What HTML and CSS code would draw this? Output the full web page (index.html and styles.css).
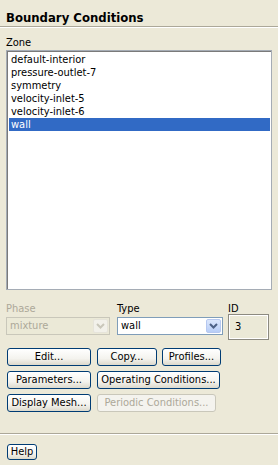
FILE: index.html
```html
<!DOCTYPE html>
<html>
<head>
<meta charset="utf-8">
<link rel="stylesheet" href="styles.css">
</head>
<body>
<div class="panel">
  <div class="title">Boundary Conditions</div>
  <div class="sep"></div>
  <div class="label zone-label">Zone</div>
  <div class="listbox">
    <div class="item">default-interior</div>
    <div class="item">pressure-outlet-7</div>
    <div class="item">symmetry</div>
    <div class="item">velocity-inlet-5</div>
    <div class="item">velocity-inlet-6</div>
    <div class="item selected">wall</div>
  </div>
  <div class="fields">
    <div class="field phase">
      <div class="label disabled">Phase</div>
      <div class="combo combo-disabled">
        <span class="combo-text">mixture</span>
        <span class="combo-btn btn-disabled">
          <svg width="9" height="6" viewBox="0 0 9 6"><path d="M1 1 L4.5 4.5 L8 1" fill="none" stroke="#c9c7ba" stroke-width="2"/></svg>
        </span>
      </div>
    </div>
    <div class="field type">
      <div class="label">Type</div>
      <div class="combo">
        <span class="combo-text">wall</span>
        <span class="combo-btn">
          <svg width="9" height="6" viewBox="0 0 9 6"><path d="M1 1 L4.5 4.5 L8 1" fill="none" stroke="#4d6185" stroke-width="2"/></svg>
        </span>
      </div>
    </div>
    <div class="field id">
      <div class="label">ID</div>
      <div class="idbox">3</div>
    </div>
  </div>
  <div class="buttons">
    <div class="brow">
      <div class="btn w84">Edit...</div>
      <div class="btn w60">Copy...</div>
      <div class="btn w59">Profiles...</div>
    </div>
    <div class="brow">
      <div class="btn w84">Parameters...</div>
      <div class="btn w123">Operating Conditions...</div>
    </div>
    <div class="brow">
      <div class="btn w84">Display Mesh...</div>
      <div class="btn w119 disabled-btn">Periodic Conditions...</div>
    </div>
  </div>
  <div class="sep bottom-sep"></div>
  <div class="help-row">
    <div class="btn help">Help</div>
  </div>
</div>
</body>
</html>
```

FILE: styles.css
```css
html, body {
  margin: 0;
  padding: 0;
  background: #ece9d8;
}
body {
  width: 278px;
  height: 465px;
  overflow: hidden;
  font-family: "DejaVu Sans Condensed", "DejaVu Sans", "Liberation Sans", sans-serif;
  font-size: 11px;
  color: #000;
}
.panel {
  display: flex;
  flex-direction: column;
}
.title {
  font-family: "DejaVu Sans Condensed", "DejaVu Sans", sans-serif;
  font-weight: bold;
  font-size: 13px;
  line-height: 16px;
  margin-top: 10px;
  padding-left: 6px;
  height: 16px;
}
.sep {
  height: 0;
  border-top: 1px solid #aca899;
  border-bottom: 1px solid #ffffff;
}
.label {
  font-size: 11px;
  line-height: 13px;
  height: 13px;
}
.label.disabled {
  color: #aca899;
}
.zone-label {
  margin-top: 8px;
  padding-left: 6px;
}
.listbox {
  margin: 1px 0 0 6px;
  width: 266px;
  height: 240px;
  box-sizing: border-box;
  border: 1px solid #a5acb5;
  box-shadow: inset 1px 1px 0 #7a7a7a;
  background: #fff;
  padding: 2px 1px 0 2px;
}
.item {
  height: 13px;
  line-height: 13px;
  padding-left: 2px;
  white-space: nowrap;
}
.item.selected {
  background: #316ac5;
  color: #fff;
}
.fields {
  display: flex;
  margin-top: 12px;
  padding-left: 6px;
}
.field {
  display: flex;
  flex-direction: column;
}
.phase { width: 104px; margin-right: 7px; }
.type { width: 106px; margin-right: 5px; }
.id { width: 41px; }
.field .label {
  height: 15px;
}
.combo {
  height: 18px;
  box-sizing: border-box;
  border: 1px solid #7f9db9;
  background: #fff;
  display: flex;
  align-items: center;
  justify-content: space-between;
}
.combo-disabled {
  border-color: #c9c7ba;
  background: #ebe9d7;
  color: #aca899;
}
.combo-text {
  padding-left: 3px;
  line-height: 16px;
}
.combo-btn {
  width: 15px;
  height: 14px;
  margin-right: 1px;
  box-sizing: border-box;
  border: 1px solid #b6c8f0;
  border-radius: 2px;
  background: linear-gradient(#dce7fc, #b7cdf7);
  display: flex;
  align-items: center;
  justify-content: center;
}
.btn-disabled {
  border-color: #e6e4da;
  background: #f2f1ea;
}
.idbox {
  height: 26px;
  margin-top: -3px;
  box-sizing: border-box;
  border: 1px solid #8c8a80;
  box-shadow: inset 1px 1px 0 #fff, inset -1px -1px 0 #fff;
  padding: 5px 0 0 6px;
  line-height: 13px;
  background: #ebe9d7;
}
.buttons {
  display: flex;
  flex-direction: column;
  gap: 5px;
  margin-top: 8px;
  padding-left: 7px;
}
.brow {
  display: flex;
  gap: 6px;
}
.brow .btn + .btn + .btn { margin-left: -1px; }
.btn {
  height: 18px;
  box-sizing: border-box;
  border: 1px solid #003c74;
  border-radius: 3px;
  background: linear-gradient(#ffffff, #f4f3ee 60%, #dcd9cc);
  display: flex;
  align-items: center;
  justify-content: center;
  line-height: 14px;
  white-space: nowrap;
}
.disabled-btn {
  border-color: #c9c7ba;
  background: #f4f3ee;
  color: #aca899;
}
.w84 { width: 84px; }
.w60 { width: 60px; }
.w59 { width: 59px; }
.w123 { width: 123px; }
.w119 { width: 119px; }
.bottom-sep {
  margin-top: 21px;
}
.help-row {
  padding-left: 7px;
  margin-top: 9px;
}
.help {
  width: 30px;
  height: 16px;
}
```
